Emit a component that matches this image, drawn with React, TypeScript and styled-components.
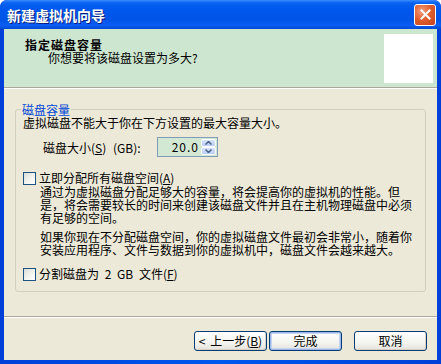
import React from 'react';
import styled, { createGlobalStyle } from 'styled-components';

const GlobalStyle = createGlobalStyle`
  html, body {
    margin: 0;
    padding: 0;
    background: #ffffff;
  }
  body {
    font-family: "Noto Sans CJK SC", "Liberation Sans", sans-serif;
    font-size: 12px;
    color: #000;
  }
`;

const Window = styled.div`
  width: 441px;
  height: 364px;
  display: flex;
  flex-direction: column;
  border-radius: 7px 7px 0 0;
  overflow: hidden;
  background: #0831d9;
`;

const TitleBar = styled.div`
  height: 29px;
  flex: none;
  display: flex;
  align-items: center;
  justify-content: space-between;
  padding: 0 5px 0 7px;
  background: linear-gradient(
    to bottom,
    #3a8cff 0%,
    #0a62f0 10%,
    #0058ee 30%,
    #0054e6 70%,
    #0a5ef5 88%,
    #0048d0 100%
  );
`;

const TitleText = styled.span`
  color: #fff;
  font-weight: bold;
  font-size: 14px;
  text-shadow: 1px 1px 0 #0a1f7d;
`;

const CloseButton = styled.div`
  width: 20px;
  height: 20px;
  border: 1px solid #fff;
  border-radius: 3px;
  display: flex;
  align-items: center;
  justify-content: center;
  background: radial-gradient(circle at 35% 30%, #f29e7e 0%, #e0602f 45%, #c2401c 100%);
`;

const Frame = styled.div`
  flex: 1;
  display: flex;
  padding: 0 4px 4px;
  background: linear-gradient(to right, #0040d8, #0058ee 50%, #0040d8);
`;

const Client = styled.div`
  flex: 1;
  display: flex;
  flex-direction: column;
  background: #ece9d8;
`;

const Header = styled.div`
  height: 58px;
  flex: none;
  display: flex;
  justify-content: space-between;
  background: #cde6cf;
  border-bottom: 1px solid #aca899;
  box-shadow: 0 1px 0 #fff;
`;

const HeaderText = styled.div`
  padding: 9px 0 0 21px;
  line-height: 13px;
`;

const Heading = styled.div`
  font-weight: bold;
  letter-spacing: 1px;
`;

const Subtitle = styled.div`
  padding-left: 23px;
`;

const HeaderPicture = styled.div`
  width: 49px;
  height: 49px;
  margin: 5px 4px 0 0;
  background: #fff;
`;

const Body = styled.div`
  flex: 1;
  padding: 15px 11px 0 11px;
`;

const Group = styled.fieldset`
  margin: 0;
  padding: 0 7px 10px 7px;
  border: 1px solid #d0d0bf;
  border-radius: 3px;
  line-height: 13px;
`;

const Legend = styled.legend`
  color: #0046d5;
  padding: 0 1px;
  margin-left: -2px;
  line-height: 13px;
`;

const Line = styled.div`
  line-height: 13px;
`;

const SizeRow = styled.div`
  display: flex;
  align-items: center;
  margin-top: 8px;
  padding-left: 20px;
  gap: 13px;
`;

const SizeLabel = styled.span`
  width: 101px;
  word-spacing: 4px;
`;

const SpinBox = styled.div`
  width: 59px;
  height: 18px;
  display: flex;
  border: 1px solid #7f9db9;
  background: #d3e8d3;
`;

const SpinValue = styled.div`
  flex: 1;
  text-align: right;
  padding-right: 2px;
  line-height: 18px;
  letter-spacing: 1px;
`;

const SpinButtons = styled.div`
  width: 15px;
  display: flex;
  flex-direction: column;
  padding: 1px 1px 1px 0;
`;

const SpinButton = styled.div`
  flex: 1;
  display: flex;
  align-items: center;
  justify-content: center;
  border: 1px solid #fff;
  border-radius: 2px;
  background: linear-gradient(to bottom, #d8e4fb, #b9cdf6);
`;

const CheckRow = styled.label<{ $top: number }>`
  display: flex;
  align-items: center;
  gap: 3px;
  margin-top: ${(p) => p.$top}px;
  line-height: 14px;
  word-spacing: 3px;
`;

const CheckBox = styled.span`
  width: 11px;
  height: 11px;
  border: 1px solid #1c5180;
  background: linear-gradient(135deg, #dcdcd7 0%, #f5f5f2 60%, #fff 100%);
`;

const Para = styled.p<{ $top: number }>`
  margin: ${(p) => p.$top}px 0 0 17px;
  line-height: 13px;
  white-space: nowrap;
`;

const Footer = styled.div`
  flex: none;
  display: flex;
  justify-content: flex-end;
  align-items: center;
  padding: 14px 10px 9px 0;
  border-top: 1px solid #aca899;
  box-shadow: inset 0 1px 0 #fff;
`;

const Button = styled.div<{ $default?: boolean; $gap?: number }>`
  width: 71px;
  height: 18px;
  margin-left: ${(p) => p.$gap ?? 0}px;
  display: flex;
  align-items: center;
  justify-content: center;
  border: 1px solid #003c74;
  border-radius: 3px;
  background: linear-gradient(to bottom, #ffffff 0%, #f4f4f0 60%, #e3e2da 100%);
  box-shadow: ${(p) =>
    p.$default ? 'inset 0 0 0 1px #9db7e8, inset 0 0 0 2px #c3d4f5' : 'inset -1px -1px 0 #d6d0c5'};
  line-height: 14px;
  word-spacing: 2px;
`;

const U = styled.span`
  text-decoration: underline;
`;

const Chevron: React.FC<{ up?: boolean }> = ({ up }) => (
  <svg width='7' height='4' viewBox='0 0 7 4'>
    <path
      d={up ? 'M0.5 3.5 L3.5 0.5 L6.5 3.5' : 'M0.5 0.5 L3.5 3.5 L6.5 0.5'}
      fill='none'
      stroke='#4d6185'
      strokeWidth='1.5'
    />
  </svg>
);

export default function App() {
  return (
    <>
      <GlobalStyle />
      <Window>
        <TitleBar>
          <TitleText>新建虚拟机向导</TitleText>
          <CloseButton>
            <svg width='11' height='11' viewBox='0 0 11 11'>
              <path d='M1.5 1.5 L9.5 9.5 M9.5 1.5 L1.5 9.5' stroke='#fff' strokeWidth='2' strokeLinecap='square' />
            </svg>
          </CloseButton>
        </TitleBar>
        <Frame>
          <Client>
            <Header>
              <HeaderText>
                <Heading>指定磁盘容量</Heading>
                <Subtitle>你想要将该磁盘设置为多大?</Subtitle>
              </HeaderText>
              <HeaderPicture />
            </Header>
            <Body>
              <Group>
                <Legend>磁盘容量</Legend>
                <Line>虚拟磁盘不能大于你在下方设置的最大容量大小。</Line>
                <SizeRow>
                  <SizeLabel>
                    磁盘大小(<U>S</U>) (GB):
                  </SizeLabel>
                  <SpinBox>
                    <SpinValue>20.0</SpinValue>
                    <SpinButtons>
                      <SpinButton>
                        <Chevron up />
                      </SpinButton>
                      <SpinButton>
                        <Chevron />
                      </SpinButton>
                    </SpinButtons>
                  </SpinBox>
                </SizeRow>
                <CheckRow $top={14}>
                  <CheckBox />
                  <span>
                    立即分配所有磁盘空间(<U>A</U>)
                  </span>
                </CheckRow>
                <Para $top={0}>
                  通过为虚拟磁盘分配足够大的容量，将会提高你的虚拟机的性能。但
                  <br />
                  是，将会需要较长的时间来创建该磁盘文件并且在主机物理磁盘中必须
                  <br />
                  有足够的空间。
                </Para>
                <Para $top={6}>
                  如果你现在不分配磁盘空间，你的虚拟磁盘文件最初会非常小，随着你
                  <br />
                  安装应用程序、文件与数据到你的虚拟机中，磁盘文件会越来越大。
                </Para>
                <CheckRow $top={11}>
                  <CheckBox />
                  <span>
                    分割磁盘为 2 GB 文件(<U>F</U>)
                  </span>
                </CheckRow>
              </Group>
            </Body>
            <Footer>
              <Button>
                &lt; 上一步(<U>B</U>)
              </Button>
              <Button $default $gap={2}>
                完成
              </Button>
              <Button $gap={12}>取消</Button>
            </Footer>
          </Client>
        </Frame>
      </Window>
    </>
  );
}
